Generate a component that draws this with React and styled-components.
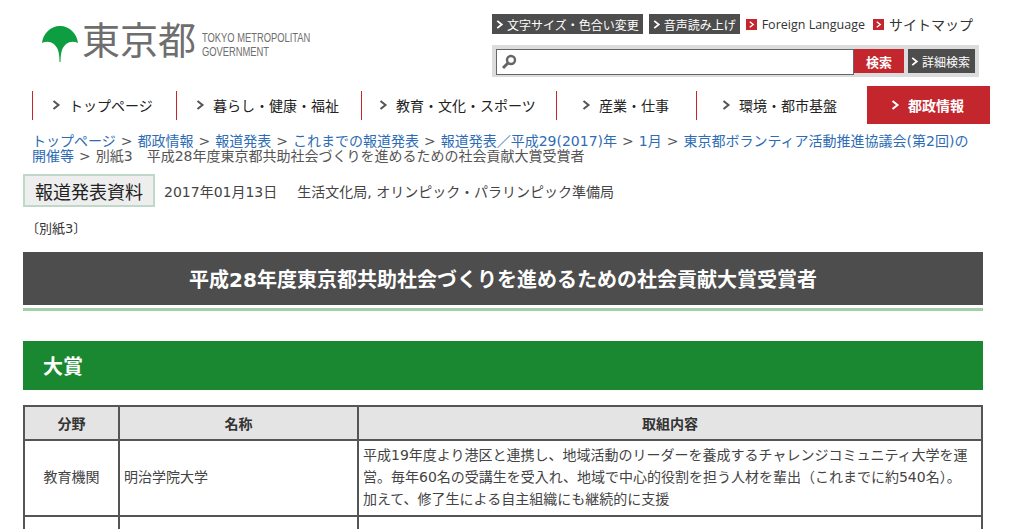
import React from 'react';
import styled, { createGlobalStyle } from 'styled-components';

const FONT = '"DejaVu Sans", "Noto Sans CJK JP", sans-serif';

const GlobalStyle = createGlobalStyle`
  html, body {
    margin: 0;
    height: 529px;
    overflow: hidden;
    background: #fff;
  }
  body {
    font-family: ${FONT};
    font-size: 14px;
    color: #333;
  }
`;

const Chevron = ({ size = 10, color = '#555' }) => (
  <svg width={size} height={size} viewBox="0 0 10 10" style={{ flex: 'none' }}>
    <path d="M2.5 1 L7.5 5 L2.5 9" fill="none" stroke={color} strokeWidth="2" />
  </svg>
);

const navItems = [
  { label: 'トップページ', width: 144, pad: 18 },
  { label: '暮らし・健康・福祉', width: 185, pad: 18 },
  { label: '教育・文化・スポーツ', width: 195, pad: 16 },
  { label: '産業・仕事', width: 140, pad: 24 },
  { label: '環境・都市基盤', width: 171, pad: 24 },
];

const crumbs = [
  'トップページ',
  '都政情報',
  '報道発表',
  'これまでの報道発表',
  '報道発表／平成29(2017)年',
  '1月',
  '東京都ボランティア活動推進協議会(第2回)の開催等',
];

const App = () => {
  return <>
    <GlobalStyle />
    <Page>
      <Header>
        <LogoWrapper>
          <svg width="36" height="36" viewBox="0 0 36 36">
            <path
              d="M18 0 C8 0 1 8 0 17 C6 14 13 16 16 24 C17 27 17.5 31 17.5 36 L18.5 36 C18.5 31 19 27 20 24 C23 16 30 14 36 17 C35 8 28 0 18 0 Z"
              fill="#0c9e41"
            />
          </svg>
          <LogoName>東京都</LogoName>
          <LogoEnglish>TOKYO METROPOLITAN<br />GOVERNMENT</LogoEnglish>
        </LogoWrapper>

        <HeaderRight>
          <TopLinks>
            <DarkLink><Chevron size={9} color="#fff" />文字サイズ・色合い変更</DarkLink>
            <DarkLink><Chevron size={9} color="#fff" />音声読み上げ</DarkLink>
            <PlainLink $small $gap={8}><RedMark><Chevron size={7} color="#fff" /></RedMark>Foreign Language</PlainLink>
            <PlainLink $gap={8}><RedMark><Chevron size={7} color="#fff" /></RedMark>サイトマップ</PlainLink>
          </TopLinks>
          <SearchPanel>
            <SearchBox>
              <svg width="16" height="16" viewBox="0 0 16 16">
                <circle cx="10" cy="6" r="4" fill="none" stroke="#666" strokeWidth="2.4" />
                <path d="M7 9 L2 14" stroke="#666" strokeWidth="3" />
              </svg>
            </SearchBox>
            <SearchButton>検索</SearchButton>
            <DetailButton><Chevron size={9} color="#fff" />詳細検索</DetailButton>
          </SearchPanel>
        </HeaderRight>
      </Header>

      <Nav>
        {navItems.map((item) => (
          <NavItem key={item.label} $width={item.width} $pad={item.pad}>
            <Chevron size={10} />
            {item.label}
          </NavItem>
        ))}
        <ActiveNavItem><Chevron size={10} color="#fff" />都政情報</ActiveNavItem>
      </Nav>

      <Breadcrumb>
        {crumbs.map((crumb) => (
          <React.Fragment key={crumb}>
            <a>{crumb}</a>
            <Separator>&gt;</Separator>
          </React.Fragment>
        ))}
        別紙3　平成28年度東京都共助社会づくりを進めるための社会貢献大賞受賞者
      </Breadcrumb>

      <Content>
        <MetaRow>
          <Badge>報道発表資料</Badge>
          <MetaDate>2017年01月13日</MetaDate>
          <span>生活文化局, オリンピック・パラリンピック準備局</span>
        </MetaRow>

        <Attachment>〔別紙3〕</Attachment>

        <Title>平成28年度東京都共助社会づくりを進めるための社会貢献大賞受賞者</Title>
        <TitleRule />

        <SectionTitle>大賞</SectionTitle>

        <AwardTable>
          <colgroup>
            <col style={{ width: 95 }} />
            <col style={{ width: 239 }} />
            <col />
          </colgroup>
          <thead>
            <tr>
              <HeadCell>分野</HeadCell>
              <HeadCell>名称</HeadCell>
              <HeadCell>取組内容</HeadCell>
            </tr>
          </thead>
          <tbody>
            <tr>
              <Cell $center>教育機関</Cell>
              <Cell>明治学院大学</Cell>
              <Cell>
                平成19年度より港区と連携し、地域活動のリーダーを養成するチャレンジコミュニティ大学を運営。毎年60名の受講生を受入れ、地域で中心的役割を担う人材を輩出（これまでに約540名）。<br />
                加えて、修了生による自主組織にも継続的に支援
              </Cell>
            </tr>
            <tr>
              <Cell $center>&nbsp;</Cell>
              <Cell>&nbsp;</Cell>
              <Cell>&nbsp;</Cell>
            </tr>
          </tbody>
        </AwardTable>
      </Content>
    </Page>
  </>;
};

export default App;

const Page = styled.div`
  width: 1029px;
  height: 529px;
  overflow: hidden;
`;

const Header = styled.div`
  display: flex;
  justify-content: space-between;

  height: 86px;
  padding: 14px 50px 0 42px;
  box-sizing: border-box;
`;

const LogoWrapper = styled.div`
  display: flex;
  align-items: flex-start;

  padding-top: 12px;
`;

const LogoName = styled.div`
  margin-left: 4px;
  margin-top: -11px;

  color: #6e6e6e;
  font-size: 38px;
  line-height: 52px;
  white-space: nowrap;
`;

const LogoEnglish = styled.div`
  width: 130px;
  margin-left: 6px;
  margin-top: 5px;

  color: #6e6e6e;
  font-family: "Liberation Sans", sans-serif;
  font-size: 12px;
  line-height: 14px;
  white-space: nowrap;

  transform: scaleX(0.78);
  transform-origin: left top;
`;

const HeaderRight = styled.div`
  display: flex;
  flex-direction: column;

  width: 487px;
`;

const TopLinks = styled.div`
  display: flex;
  align-items: center;

  height: 20px;
`;

const DarkLink = styled.a`
  display: flex;
  align-items: center;
  gap: 3px;

  height: 20px;
  padding: 0 4px 0 3px;
  margin-right: 6px;

  background: #4d4d4d;
  color: #fff;
  font-size: 12px;
  white-space: nowrap;
`;

const PlainLink = styled.a`
  display: flex;
  align-items: center;
  gap: 5px;

  margin-right: ${(p) => p.$gap}px;

  color: #333;
  font-family: ${(p) => (p.$small ? '"Open Sans", "Noto Sans", sans-serif' : FONT)};
  font-size: ${(p) => (p.$small ? 12.5 : 14)}px;
  white-space: nowrap;
`;

const RedMark = styled.span`
  display: flex;
  align-items: center;
  justify-content: center;

  width: 11px;
  height: 11px;

  background: #c4262e;
`;

const SearchPanel = styled.div`
  display: flex;

  height: 32px;
  margin-top: 11px;
  padding: 4px;
  box-sizing: border-box;

  background: #dcdcdc;
`;

const SearchBox = styled.div`
  display: flex;
  align-items: center;

  width: 352px;
  height: 24px;
  padding-left: 4px;

  background: #fff;
  border: 1px solid #666;
`;

const SearchButton = styled.div`
  display: flex;
  align-items: center;
  justify-content: center;

  width: 50px;

  background: #c4262e;
  color: #fff;
  font-size: 13px;
  font-weight: bold;
`;

const DetailButton = styled.div`
  display: flex;
  align-items: center;
  gap: 3px;

  width: 67px;
  margin-left: 4px;
  padding-left: 2px;
  box-sizing: border-box;

  background: #4d4d4d;
  color: #fff;
  font-size: 12px;
  white-space: nowrap;
`;

const Nav = styled.div`
  display: flex;
  align-items: center;

  height: 38px;
  padding-left: 32px;

  color: #222;
`;

const NavItem = styled.a`
  display: flex;
  align-items: center;
  gap: 8px;

  width: ${(p) => p.$width}px;
  height: 29px;
  padding-left: ${(p) => p.$pad}px;
  box-sizing: border-box;

  border-left: 1px solid #c4262e;
  font-size: 14px;
  white-space: nowrap;
`;

const ActiveNavItem = styled.a`
  display: flex;
  align-items: center;
  justify-content: center;
  gap: 8px;

  width: 123px;
  height: 38px;
  padding-right: 3px;
  box-sizing: border-box;

  background: #c4262e;
  color: #fff;
  font-size: 14px;
  font-weight: bold;
`;

const Breadcrumb = styled.div`
  width: 950px;
  margin-top: 10px;
  margin-left: 32px;

  color: #555;
  font-size: 14px;
  line-height: 15px;

  a {
    color: #2d6cb5;
  }
`;

const Separator = styled.span`
  margin: 0 5px;
`;

const Content = styled.div`
  width: 960px;
  margin-left: 23px;
`;

const MetaRow = styled.div`
  display: flex;
  align-items: center;

  margin-top: 10px;

  color: #444;
  font-size: 14px;
`;

const Badge = styled.div`
  display: flex;
  align-items: center;
  justify-content: center;

  width: 132px;
  height: 33px;
  box-sizing: border-box;

  background: #eee;
  border: 2px solid #c0d8c8;
  color: #222;
  font-size: 18px;
`;

const MetaDate = styled.span`
  margin-left: 9px;
  margin-right: 20px;
`;

const Attachment = styled.div`
  margin-top: 12px;
  margin-left: 3px;

  color: #333;
  font-size: 13px;
  line-height: 20px;
`;

const Title = styled.h1`
  display: flex;
  align-items: center;
  justify-content: center;

  height: 53px;
  margin: 13px 0 0;

  background: #4d4d4d;
  color: #fff;
  font-size: 20px;
  font-weight: bold;
`;

const TitleRule = styled.div`
  height: 3px;
  margin-top: 3px;

  background: #a0d0a8;
`;

const SectionTitle = styled.h2`
  display: flex;
  align-items: center;

  height: 49px;
  margin: 30px 0 0;
  padding-left: 20px;

  background: #1a8830;
  color: #fff;
  font-size: 20px;
  font-weight: bold;
`;

const AwardTable = styled.table`
  width: 960px;
  margin-top: 15px;

  border-collapse: collapse;
  table-layout: fixed;
  border: 2px solid #555;
`;

const HeadCell = styled.th`
  height: 32px;
  padding: 0;

  background: #e4e4e4;
  border: 2px solid #555;
  color: #333;
  font-size: 14px;
  font-weight: bold;
`;

const Cell = styled.td`
  padding: 3px 4px 5px;

  border: 2px solid #555;
  color: #444;
  font-size: 14px;
  line-height: 22px;
  text-align: ${(p) => (p.$center ? 'center' : 'left')};
`;
